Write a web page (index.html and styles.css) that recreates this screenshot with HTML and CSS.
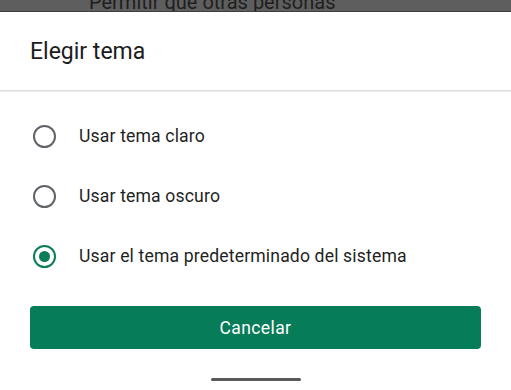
FILE: index.html
```html
<!DOCTYPE html>
<html lang="es">
<head>
<meta charset="utf-8">
<title>Elegir tema</title>
<link rel="stylesheet" href="styles.css">
</head>
<body>
<div class="backdrop"><span class="backdrop-text">Permitir que otras personas</span></div>
<div class="sheet">
  <h1 class="title">Elegir tema</h1>
  <div class="divider"></div>
  <ul class="options">
    <li class="option">
      <span class="radio"></span>
      <span class="label">Usar tema claro</span>
    </li>
    <li class="option">
      <span class="radio"></span>
      <span class="label">Usar tema oscuro</span>
    </li>
    <li class="option">
      <span class="radio radio-checked"></span>
      <span class="label">Usar el tema predeterminado del sistema</span>
    </li>
  </ul>
  <div class="actions">
    <button class="cancel">Cancelar</button>
  </div>
  <div class="nav-handle-row"><span class="nav-handle"></span></div>
</div>
</body>
</html>
```
FILE: styles.css
```css
html, body {
  margin: 0;
  padding: 0;
  background: #ffffff;
  font-family: Roboto, "Liberation Sans", sans-serif;
  width: 511px;
  height: 390px;
  overflow: hidden;
}

.backdrop {
  height: 11px;
  background: #5e5e5e;
  border-bottom: 1px solid #3e3e3e;
  overflow: hidden;
  padding-left: 89px;
}

.backdrop-text {
  display: block;
  font-size: 20px;
  line-height: 20px;
  color: #1f1f1f;
  margin-top: -8px;
  white-space: nowrap;
}

.sheet {
  background: #ffffff;
}

.title {
  margin: 0;
  padding: 26px 0 0 30px;
  font-size: 23px;
  font-weight: 400;
  line-height: 28px;
  height: 52px;
  color: #1c1c1c;
}

.divider {
  height: 1px;
  background: #dcdcdc;
  box-shadow: 0 1px 0 #eeeeee;
}

.options {
  list-style: none;
  margin: 0;
  padding: 15px 0 0 0;
}

.option {
  display: flex;
  align-items: center;
  height: 60px;
  padding-left: 33px;
}

.radio {
  box-sizing: border-box;
  width: 23px;
  height: 23px;
  border: 2px solid #5f6368;
  border-radius: 50%;
  display: flex;
  align-items: center;
  justify-content: center;
  flex: none;
}

.radio-checked {
  border-color: #0b7d58;
}

.radio-checked::after {
  content: "";
  width: 11px;
  height: 11px;
  border-radius: 50%;
  background: #0b7d58;
}

.label {
  margin-left: 23px;
  font-size: 17.6px;
  color: #1f1f1f;
  letter-spacing: 0.15px;
}

.actions {
  padding: 20px 30px 0 30px;
}

.cancel {
  display: block;
  width: 100%;
  height: 43px;
  border: none;
  border-radius: 4px;
  background: #077c59;
  color: #ffffff;
  font-family: Roboto, "Liberation Sans", sans-serif;
  font-size: 17.5px;
  letter-spacing: 0.4px;
  padding: 0;
}

.nav-handle-row {
  display: flex;
  justify-content: center;
  padding-top: 29px;
}

.nav-handle {
  display: block;
  width: 90px;
  height: 3px;
  background: #595959;
  border-radius: 2px;
}
```
